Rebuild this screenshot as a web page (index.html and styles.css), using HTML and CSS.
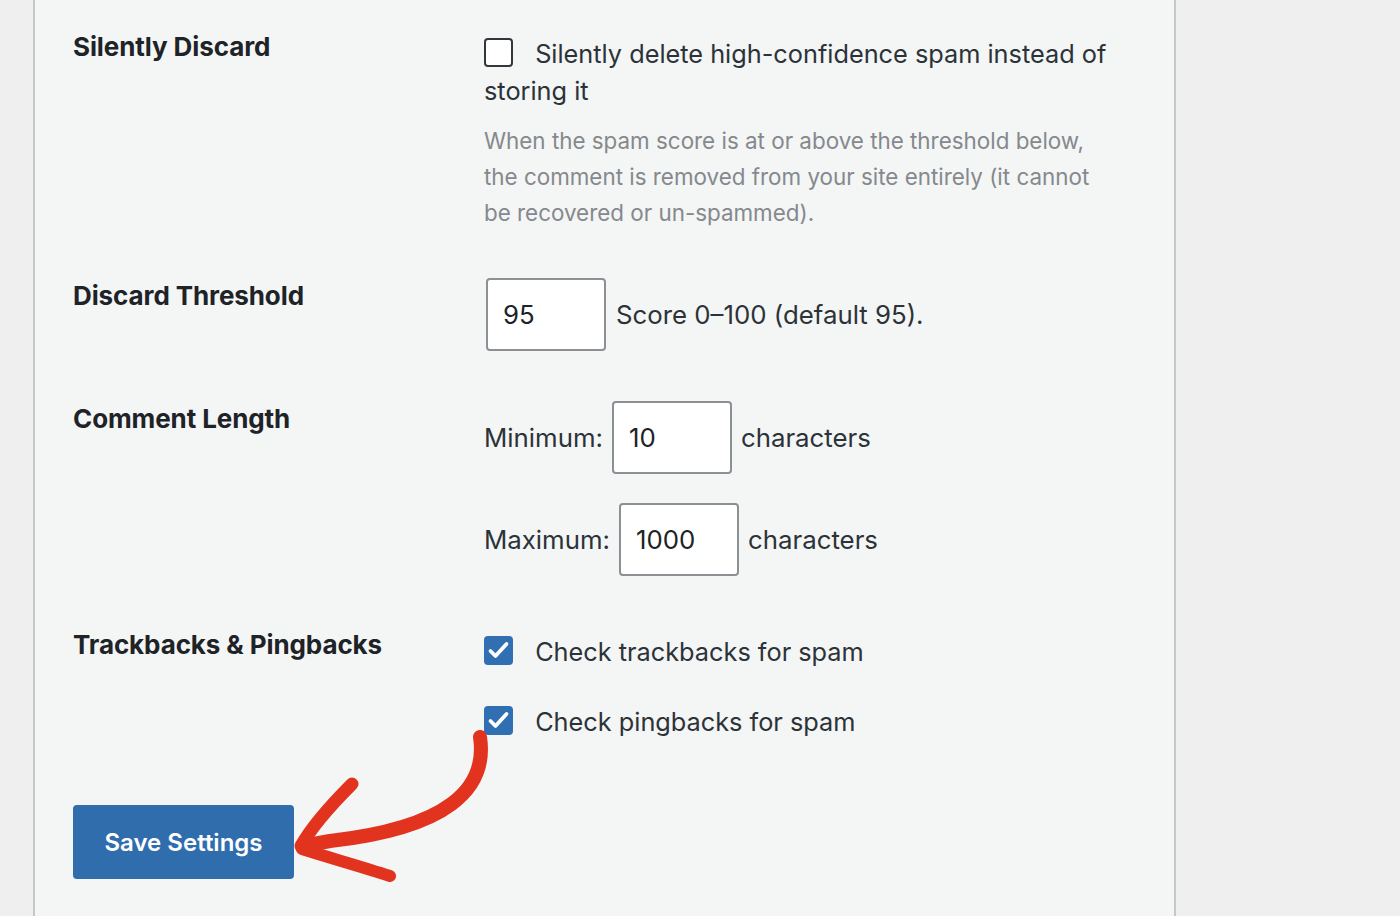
FILE: index.html
```html
<!DOCTYPE html>
<html lang="en">
<head>
<meta charset="utf-8">
<title>Spam Settings</title>
<link rel="stylesheet" href="styles.css">
</head>
<body>
<div class="page">
  <div class="gutter"></div>
  <main class="panel">
    <form class="settings">
      <div class="row row-discard">
        <div class="th">Silently Discard</div>
        <div class="td td-check">
          <label class="check-line">
            <span class="checkbox"></span>
            <span class="check-text">Silently delete high-confidence spam instead of storing it</span>
          </label>
          <p class="description">When the spam score is at or above the threshold below, the comment is removed from your site entirely (it cannot be recovered or un-spammed).</p>
        </div>
      </div>

      <div class="row row-threshold">
        <div class="th">Discard Threshold</div>
        <div class="td td-input">
          <div class="field-line">
            <span class="input input-threshold">95</span>
            <span class="field-text">Score 0–100 (default 95).</span>
          </div>
        </div>
      </div>

      <div class="row row-length">
        <div class="th">Comment Length</div>
        <div class="td td-input">
          <div class="field-line">
            <span class="field-text">Minimum:</span>
            <span class="input">10</span>
            <span class="field-text">characters</span>
          </div>
          <div class="field-line field-line-second">
            <span class="field-text">Maximum:</span>
            <span class="input">1000</span>
            <span class="field-text">characters</span>
          </div>
        </div>
      </div>

      <div class="row row-track">
        <div class="th">Trackbacks &amp; Pingbacks</div>
        <div class="td td-check">
          <label class="check-line">
            <span class="checkbox checked"><svg viewBox="0 0 29 29" width="29" height="29"><path d="M6.5 15 L11.5 20 L22.5 8" fill="none" stroke="#fff" stroke-width="3.8" stroke-linecap="round" stroke-linejoin="round"/></svg></span>
            <span class="check-text">Check trackbacks for spam</span>
          </label>
          <label class="check-line check-line-second">
            <span class="checkbox checked"><svg viewBox="0 0 29 29" width="29" height="29"><path d="M6.5 15 L11.5 20 L22.5 8" fill="none" stroke="#fff" stroke-width="3.8" stroke-linecap="round" stroke-linejoin="round"/></svg></span>
            <span class="check-text">Check pingbacks for spam</span>
          </label>
        </div>
      </div>

      <div class="submit">
        <button type="button" class="button-primary">Save Settings</button>
      </div>
    </form>
  </main>
  <div class="gutter gutter-right"></div>
</div>

<svg class="annotation" width="1400" height="916" viewBox="0 0 1400 916">
  <g fill="none" stroke="#e2331f" stroke-linecap="round" stroke-linejoin="round">
    <path d="M480 737 C 488 790 446 828 330 841 L 302 846" stroke-width="14"/>
    <path d="M352 784 C 330 806 312 826 301 846" stroke-width="13"/>
    <path d="M302 849 C 330 858 360 866 390 876" stroke-width="12"/>
  </g>
</svg>
</body>
</html>
```

FILE: styles.css
```css
* { box-sizing: border-box; }

html, body {
  margin: 0;
  padding: 0;
  height: 100%;
}

body {
  background: #efefef;
  font-family: Inter, "Liberation Sans", Arial, sans-serif;
  color: #2c3338;
  overflow: hidden;
  position: relative;
}

.page {
  display: flex;
  height: 916px;
}

.gutter {
  width: 33px;
  flex: none;
  background: #efefef;
}

.gutter-right {
  flex: 1;
  width: auto;
}

.panel {
  width: 1143px;
  flex: none;
  background: #f4f5f5;
  border-left: 2px solid #c6c7c8;
  border-right: 2px solid #c6c7c8;
  padding: 28px 0 0 38px;
}

.row {
  display: grid;
  grid-template-columns: 411px 640px;
}

.row-threshold { margin-top: 46px; }
.row-length { margin-top: 49px; }
.row-track { margin-top: 50px; }

.th {
  font-size: 26px;
  font-weight: 700;
  line-height: 37px;
  color: #1d2327;
  letter-spacing: -0.1px;
}

.td-check { padding-top: 7px; }
.td-input { padding-top: 1px; }

.check-line {
  display: block;
  font-size: 25.3px;
  line-height: 37px;
  color: #2c3338;
}

.check-line-second { margin-top: 33px; }

.checkbox {
  display: inline-block;
  width: 29px;
  height: 29px;
  border: 2px solid #32373c;
  border-radius: 4px;
  background: #fff;
  vertical-align: top;
  margin-top: 3px;
  margin-right: 15px;
  overflow: hidden;
}

.checkbox svg { display: block; }

.checkbox.checked {
  background: #3070b2;
  border: none;
}

.description {
  margin: 14px 0 0;
  font-size: 22.4px;
  line-height: 36px;
  color: #85898d;
  width: 620px;
}

.field-line {
  display: flex;
  align-items: center;
  font-size: 25.8px;
  color: #2c3338;
}

.field-line-second { margin-top: 29px; }

.input {
  display: flex;
  align-items: center;
  width: 120px;
  height: 73px;
  padding-left: 15px;
  background: #fff;
  border: 2px solid #8c8f94;
  border-radius: 4px;
  color: #1d2327;
  margin: 0 9px;
  flex: none;
}

.input-threshold { margin-left: 2px; margin-right: 10px; }

.submit {
  margin-top: 65px;
}

.button-primary {
  width: 221px;
  height: 74px;
  background: #306dad;
  color: #fff;
  border: none;
  border-radius: 4px;
  font-family: Inter, "Liberation Sans", Arial, sans-serif;
  font-size: 24px;
  font-weight: 600;
  padding: 0;
}

.annotation {
  position: absolute;
  left: 0;
  top: 0;
  pointer-events: none;
}
```
